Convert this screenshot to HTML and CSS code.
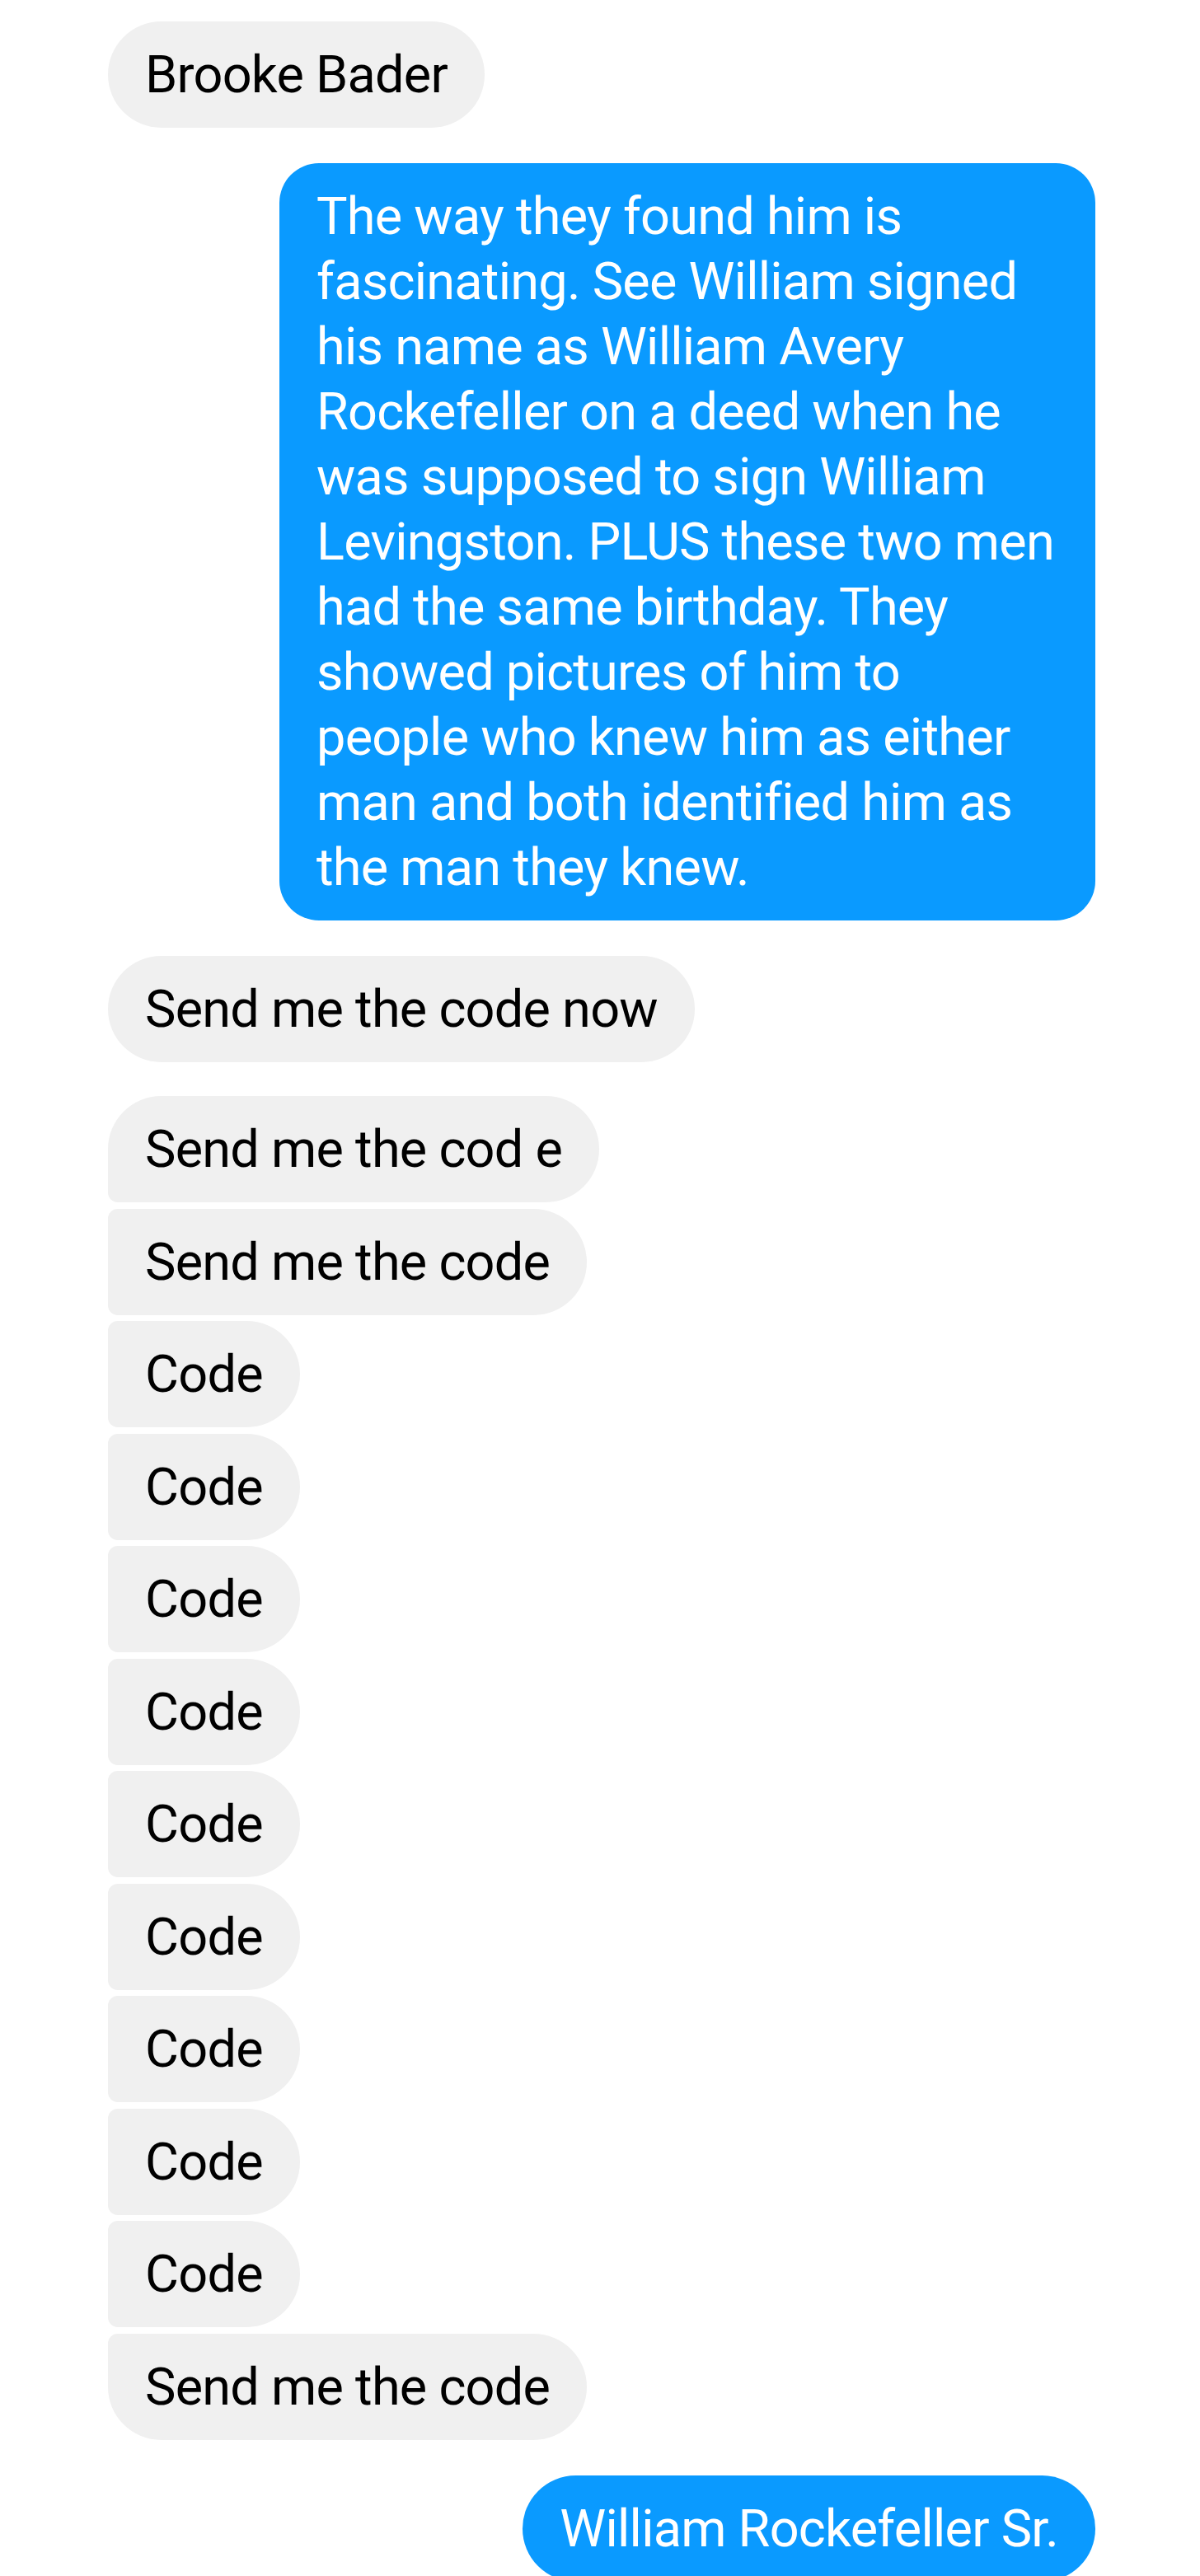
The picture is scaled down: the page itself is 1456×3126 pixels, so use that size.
FILE: index.html
```html
<!DOCTYPE html>
<html lang="en">
<head>
<meta charset="utf-8">
<title>Chat</title>
<link rel="stylesheet" href="styles.css">
</head>
<body>
<main class="thread">
  <div class="group group-first">
    <div class="bubble in single">Brooke Bader</div>
  </div>

  <div class="group">
    <div class="bubble out long">The way they found him is<br>fascinating. See William signed<br>his name as William Avery<br>Rockefeller on a deed when he<br>was supposed to sign William<br>Levingston. PLUS these two men<br>had the same birthday. They<br>showed pictures of him to<br>people who knew him as either<br>man and both identified him as<br>the man they knew.</div>
  </div>

  <div class="group">
    <div class="bubble in single">Send me the code now</div>
  </div>

  <div class="group group-tight">
    <div class="bubble in first">Send me the cod e</div>
    <div class="bubble in mid">Send me the code</div>
    <div class="bubble in mid">Code</div>
    <div class="bubble in mid">Code</div>
    <div class="bubble in mid">Code</div>
    <div class="bubble in mid">Code</div>
    <div class="bubble in mid">Code</div>
    <div class="bubble in mid">Code</div>
    <div class="bubble in mid">Code</div>
    <div class="bubble in mid">Code</div>
    <div class="bubble in mid">Code</div>
    <div class="bubble in last">Send me the code</div>
  </div>

  <div class="group">
    <div class="bubble out single">William Rockefeller Sr.</div>
  </div>
</main>
</body>
</html>
```

FILE: styles.css
```css
html, body {
  margin: 0;
  padding: 0;
  background: #ffffff;
}

body {
  font-family: Roboto, "Liberation Sans", Arial, sans-serif;
  -webkit-font-smoothing: antialiased;
}

.thread {
  display: flex;
  flex-direction: column;
  padding: 26px 127px 0 131px;
}

.group {
  display: flex;
  flex-direction: column;
  gap: 7.5px;
  margin-top: 43px;
}

.group-first {
  margin-top: 0;
}

.group-tight {
  margin-top: 41px;
}

.bubble {
  font-size: 63px;
  line-height: 79px;
  letter-spacing: -0.75px;
  padding: 25px 45px;
  white-space: nowrap;
  box-sizing: border-box;
}

.in {
  align-self: flex-start;
  background: #f0f0f0;
  color: #000000;
}

.out {
  align-self: flex-end;
  background: #0a9aff;
  color: #ffffff;
}

.single {
  border-radius: 65px;
}

.long {
  width: 990px;
  border-radius: 48px;
}

.in.first {
  border-radius: 65px 65px 65px 12px;
}

.in.mid {
  border-radius: 12px 65px 65px 12px;
}

.in.last {
  border-radius: 12px 65px 65px 65px;
}
```
